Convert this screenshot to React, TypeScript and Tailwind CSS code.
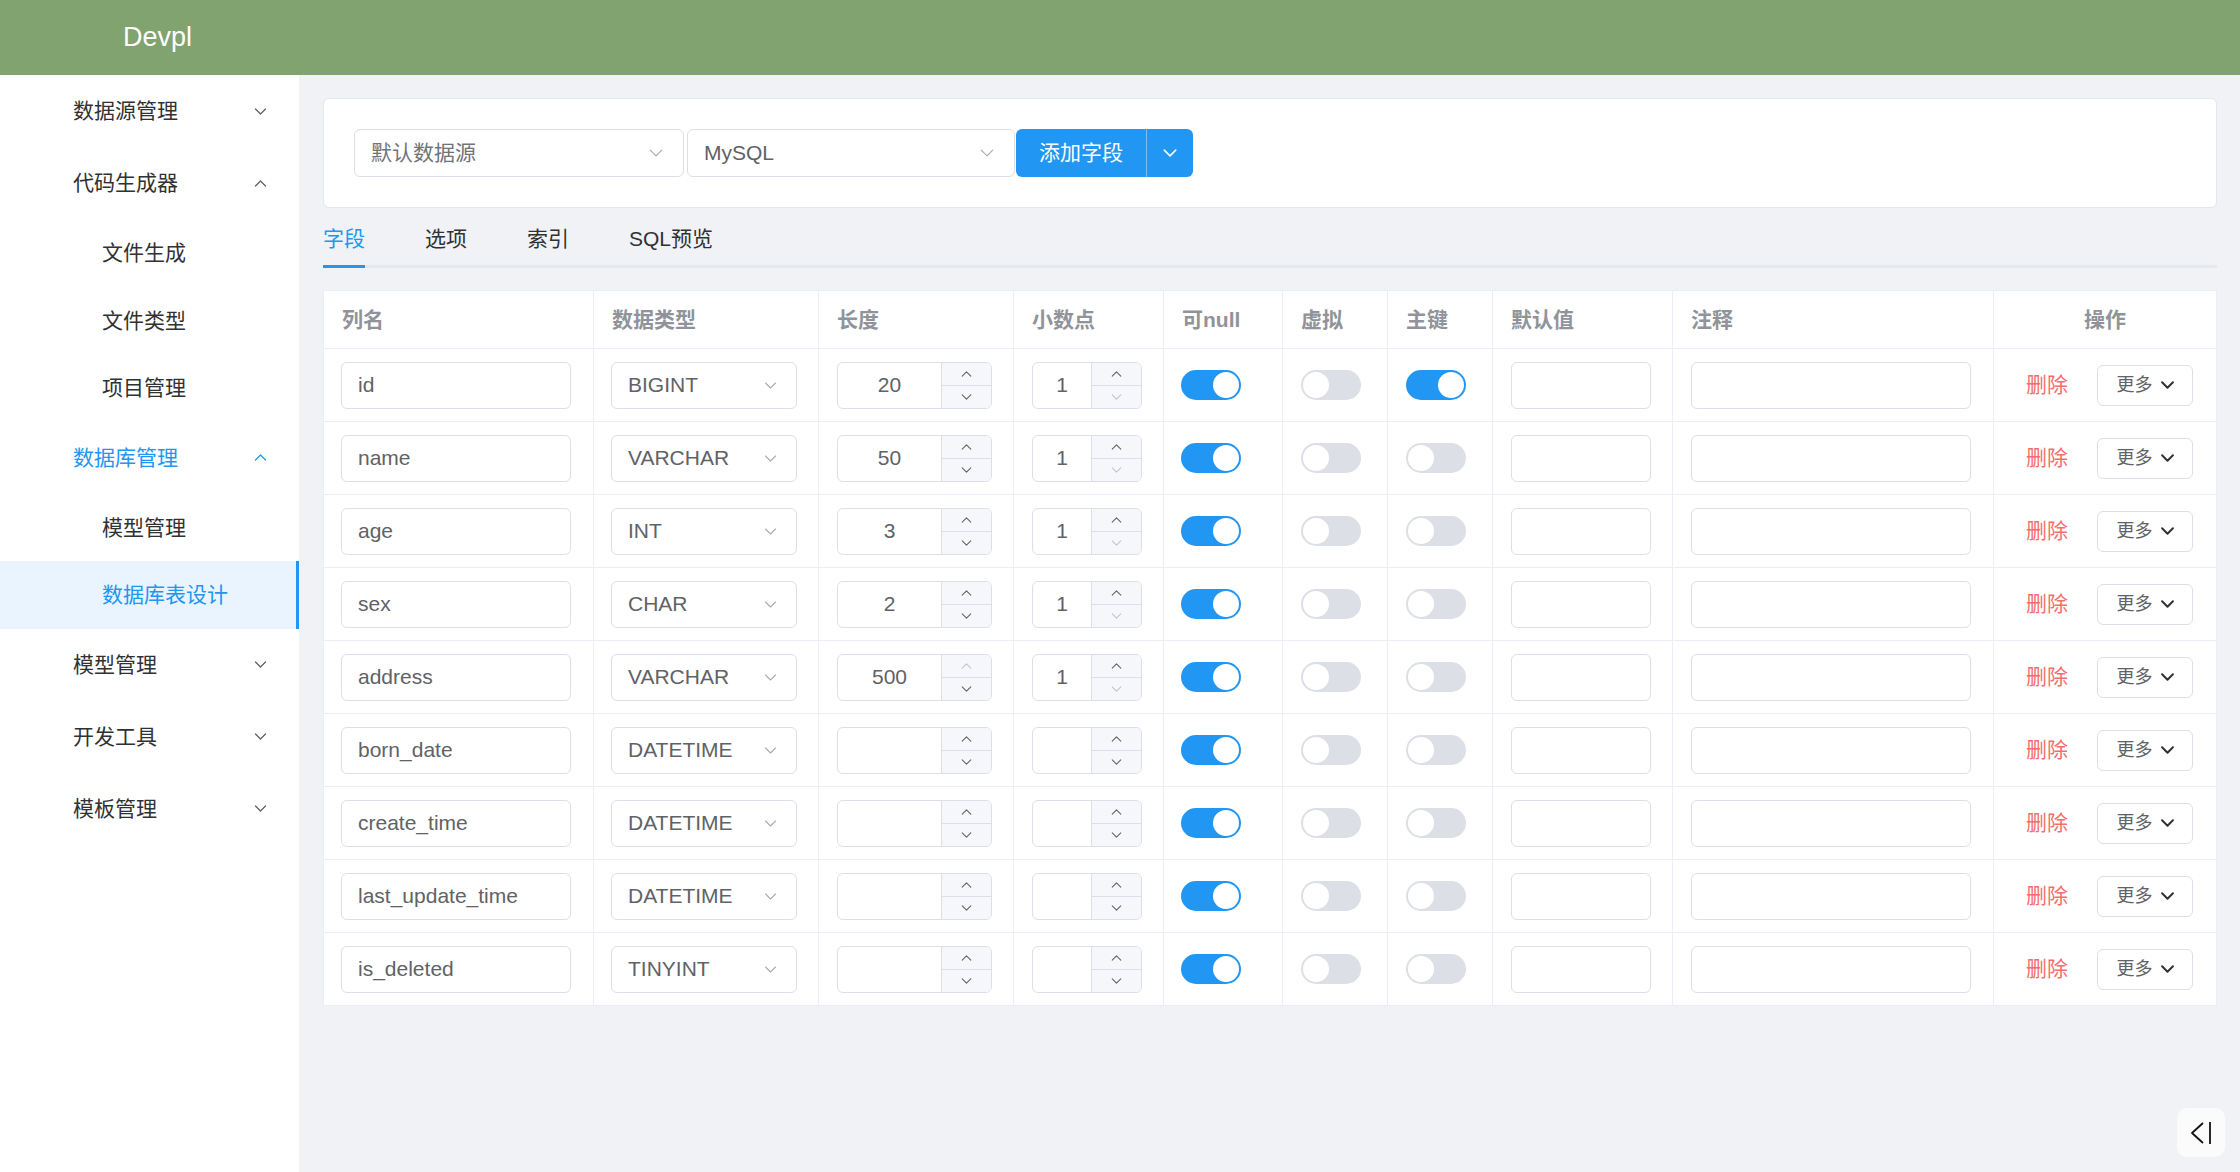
import React from "react";

type Row = {
  name: string;
  type: string;
  len: string;
  dec: string;
  pk?: boolean;
  lenMax?: boolean;
};

const ROWS: Row[] = [
  { name: "id", type: "BIGINT", len: "20", dec: "1", pk: true },
  { name: "name", type: "VARCHAR", len: "50", dec: "1" },
  { name: "age", type: "INT", len: "3", dec: "1" },
  { name: "sex", type: "CHAR", len: "2", dec: "1" },
  { name: "address", type: "VARCHAR", len: "500", dec: "1", lenMax: true },
  { name: "born_date", type: "DATETIME", len: "", dec: "" },
  { name: "create_time", type: "DATETIME", len: "", dec: "" },
  { name: "last_update_time", type: "DATETIME", len: "", dec: "" },
  { name: "is_deleted", type: "TINYINT", len: "", dec: "" },
];

const HEADERS = ["列名", "数据类型", "长度", "小数点", "可null", "虚拟", "主键", "默认值", "注释"];

function Chevron({ up, className, width = 1.3 }: { up?: boolean; className?: string; width?: number }) {
  return (
    <svg viewBox="0 0 12 7" fill="none" stroke="currentColor" strokeWidth={width} className={className}>
      <path d={up ? "M1 6l5-5 5 5" : "M1 1l5 5 5-5"} strokeLinecap="round" strokeLinejoin="round" />
    </svg>
  );
}

function MenuTitle({ label, open, active }: { label: string; open?: boolean; active?: boolean }) {
  return (
    <div
      className={
        "flex h-[72px] items-center justify-between pl-[73px] pr-[32px] text-[21px] " +
        (active ? "text-[#2196f3]" : "text-[#303133]")
      }
    >
      <span>{label}</span>
      <Chevron up={open} className={"h-[7px] w-[13px] " + (active ? "text-[#2196f3]" : "text-[#606266]")} />
    </div>
  );
}

function SubItem({ label, active }: { label: string; active?: boolean }) {
  return (
    <div
      className={
        "flex h-[67.5px] items-center pl-[102px] text-[21px] " +
        (active ? "border-r-[3px] border-[#2196f3] bg-[#e9f4fe] text-[#2196f3]" : "text-[#303133]")
      }
    >
      {label}
    </div>
  );
}

function Sidebar() {
  return (
    <aside className="w-[299px] shrink-0 bg-white">
      <MenuTitle label="数据源管理" />
      <MenuTitle label="代码生成器" open />
      <SubItem label="文件生成" />
      <SubItem label="文件类型" />
      <SubItem label="项目管理" />
      <MenuTitle label="数据库管理" open active />
      <SubItem label="模型管理" />
      <SubItem label="数据库表设计" active />
      <MenuTitle label="模型管理" />
      <MenuTitle label="开发工具" />
      <MenuTitle label="模板管理" />
    </aside>
  );
}

function Toggle({ on }: { on?: boolean }) {
  return (
    <div
      className={
        "flex h-[30px] w-[60px] items-center rounded-full px-[2px] " +
        (on ? "justify-end bg-[#2196f3]" : "justify-start bg-[#dcdfe6]")
      }
    >
      <div className="h-[26px] w-[26px] rounded-full bg-white" />
    </div>
  );
}

function NumberBox({ value, width, upOff, downOff }: { value: string; width: string; upOff?: boolean; downOff?: boolean }) {
  return (
    <div className={"flex h-[47px] overflow-hidden rounded-[6px] border border-[#dcdfe6] bg-white " + width}>
      <div className="flex flex-1 items-center justify-center text-[21px] text-[#606266]">{value}</div>
      <div className="flex w-[50px] flex-col border-l border-[#dcdfe6] bg-[#f5f7fa]">
        <div className="flex flex-1 items-center justify-center border-b border-[#dcdfe6]">
          <Chevron up className={"h-[6px] w-[11px] " + (upOff ? "text-[#c0c4cc]" : "text-[#606266]")} width={1.2} />
        </div>
        <div className="flex flex-1 items-center justify-center">
          <Chevron className={"h-[6px] w-[11px] " + (downOff ? "text-[#c0c4cc]" : "text-[#606266]")} width={1.2} />
        </div>
      </div>
    </div>
  );
}

function TextBox({ value, width }: { value?: string; width: string }) {
  return (
    <div className={"flex h-[47px] items-center rounded-[6px] border border-[#dcdfe6] bg-white px-[16px] text-[21px] text-[#606266] " + width}>
      {value}
    </div>
  );
}

function TypeSelect({ value }: { value: string }) {
  return (
    <div className="flex h-[47px] w-[186px] items-center justify-between rounded-[6px] border border-[#dcdfe6] bg-white pl-[16px] pr-[19px] text-[21px] text-[#606266]">
      <span>{value}</span>
      <Chevron className="h-[7px] w-[13px] text-[#a8abb2]" width={1.1} />
    </div>
  );
}

const GRID = "grid grid-cols-[269px_225px_195px_150px_119px_105px_105px_180px_321px_1fr]";

function FieldTable() {
  return (
    <div className="border border-[#ebeef5] bg-white">
      <div className={GRID + " h-[57px] text-[21px] font-bold text-[#909399]"}>
        {HEADERS.map((h, i) => (
          <div key={h} className={"flex items-center px-[18px] " + (i > 0 ? "border-l border-[#ebeef5]" : "")}>
            {h}
          </div>
        ))}
        <div className="flex items-center justify-center border-l border-[#ebeef5]">操作</div>
      </div>
      {ROWS.map((r) => (
        <div key={r.name} className={GRID + " h-[73px] border-t border-[#ebeef5]"}>
          <div className="flex items-center px-[17px]">
            <TextBox value={r.name} width="w-[230px]" />
          </div>
          <div className="flex items-center border-l border-[#ebeef5] px-[17px]">
            <TypeSelect value={r.type} />
          </div>
          <div className="flex items-center border-l border-[#ebeef5] px-[18px]">
            <NumberBox value={r.len} width="w-[155px]" upOff={r.lenMax} />
          </div>
          <div className="flex items-center border-l border-[#ebeef5] px-[18px]">
            <NumberBox value={r.dec} width="w-[110px]" downOff={r.dec === "1"} />
          </div>
          <div className="flex items-center border-l border-[#ebeef5] px-[17px]">
            <Toggle on />
          </div>
          <div className="flex items-center border-l border-[#ebeef5] px-[18px]">
            <Toggle />
          </div>
          <div className="flex items-center border-l border-[#ebeef5] px-[18px]">
            <Toggle on={r.pk} />
          </div>
          <div className="flex items-center border-l border-[#ebeef5] px-[18px]">
            <TextBox width="w-[140px]" />
          </div>
          <div className="flex items-center border-l border-[#ebeef5] px-[18px]">
            <TextBox width="w-[280px]" />
          </div>
          <div className="flex items-center gap-[29px] border-l border-[#ebeef5] pl-[32px]">
            <span className="text-[21px] text-[#f56c6c]">删除</span>
            <div className="flex h-[41px] w-[96px] items-center justify-center gap-[8px] rounded-[6px] border border-[#dcdfe6] bg-white text-[18px] text-[#606266]">
              <span>更多</span>
              <Chevron className="h-[8px] w-[13px] text-[#303133]" width={1.8} />
            </div>
          </div>
        </div>
      ))}
    </div>
  );
}

export default function App() {
  return (
    <div className="flex min-h-screen flex-col bg-[#f0f2f5] font-['Liberation_Sans','Noto_Sans_CJK_SC',sans-serif]">
      <header className="flex h-[75px] shrink-0 items-center bg-[#81a36f] pl-[123px] text-[27px] text-white">
        Devpl
      </header>
      <div className="flex flex-1">
        <Sidebar />
        <main className="flex-1 pl-[24px] pr-[23px] pt-[23px]">
          <div className="flex items-center rounded-[6px] border border-[#e4e7ed] bg-white p-[30px]">
            <div className="flex h-[48px] w-[330px] items-center justify-between rounded-[6px] border border-[#dcdfe6] pl-[16px] pr-[20px] text-[21px] text-[#707379]">
              <span>默认数据源</span>
              <Chevron className="h-[8px] w-[14px] text-[#a8abb2]" width={1} />
            </div>
            <div className="ml-[3px] flex h-[48px] w-[328px] items-center justify-between rounded-[6px] border border-[#dcdfe6] pl-[16px] pr-[20px] text-[21px] text-[#606266]">
              <span>MySQL</span>
              <Chevron className="h-[8px] w-[14px] text-[#a8abb2]" width={1} />
            </div>
            <div className="ml-[1px] flex h-[48px] overflow-hidden rounded-[6px] bg-[#2196f3] text-[21px] text-white">
              <div className="flex w-[130px] items-center justify-center">添加字段</div>
              <div className="flex w-[47px] items-center justify-center border-l border-[#7cbef5]">
                <Chevron className="h-[8px] w-[14px] text-white" width={1.4} />
              </div>
            </div>
          </div>

          <div className="mb-[22px] flex border-b-[3px] border-[#e4e7ed] text-[21px] text-[#303133]">
            <div className="flex h-[57px] pr-[30px]">
              <span className="-mb-[3px] flex h-[60px] items-center border-b-[3px] border-[#2196f3] pt-[5px] text-[#2196f3]">字段</span>
            </div>
            <div className="flex h-[57px] items-center px-[30px] pt-[5px]">选项</div>
            <div className="flex h-[57px] items-center px-[30px] pt-[5px]">索引</div>
            <div className="flex h-[57px] items-center px-[30px] pt-[5px]">SQL预览</div>
          </div>

          <FieldTable />
        </main>
      </div>
      <div className="fixed bottom-[15px] right-[15px] flex h-[49px] w-[48px] items-center justify-center rounded-[10px] bg-[#fbfbfb]">
        <svg viewBox="0 0 24 24" className="h-[24px] w-[24px]" fill="none" stroke="#111" strokeWidth={1.8}>
          <path d="M14 2 3 12l11 10" strokeLinejoin="round" />
          <path d="M21 1v22" />
        </svg>
      </div>
    </div>
  );
}
